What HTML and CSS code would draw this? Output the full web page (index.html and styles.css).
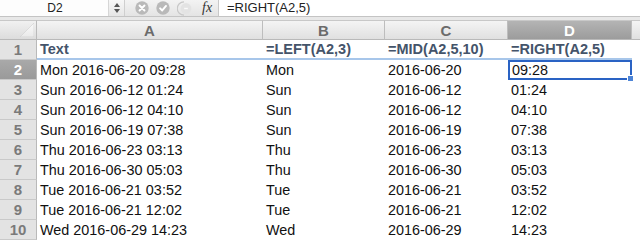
FILE: index.html
```html
<!DOCTYPE html>
<html>
<head>
<meta charset="utf-8">
<link rel="stylesheet" href="styles.css">
</head>
<body>
<div class="app">
  <div class="fbar">
    <div class="namebox">D2</div>
    <div class="stepper">
      <svg width="8" height="12" viewBox="0 0 8 12"><path d="M4 1 L7 5 L1 5 Z M1 7 L7 7 L4 11 Z" fill="#555"/></svg>
    </div>
    <div class="tools">
      <span class="circ">
        <svg width="14" height="14" viewBox="0 0 13 13"><circle cx="6.5" cy="6.5" r="6.2" fill="#b9b9b9"/><path d="M4.2 4.2 L8.8 8.8 M8.8 4.2 L4.2 8.8" stroke="#fff" stroke-width="1.8" stroke-linecap="round"/></svg>
      </span>
      <span class="circ">
        <svg width="14" height="14" viewBox="0 0 13 13"><circle cx="6.5" cy="6.5" r="6.2" fill="#b9b9b9"/><path d="M3.8 6.8 L5.8 8.8 L9.3 4.6" stroke="#fff" stroke-width="1.8" fill="none" stroke-linecap="round" stroke-linejoin="round"/></svg>
      </span>
      <span class="circ faint">
        <svg width="16" height="15" viewBox="0 0 16 15"><path d="M7 0.8 A6.7 6.7 0 0 0 7 14.2" stroke="#c8c8c8" stroke-width="1.2" fill="none"/><circle cx="9" cy="7.5" r="5.4" fill="#e3e3e3"/><path d="M7.2 7.5 L10.8 7.5" stroke="#fafafa" stroke-width="1.4"/></svg>
      </span>
      <span class="fx">fx</span>
    </div>
    <div class="formula">=RIGHT(A2,5)</div>
  </div>
  <div class="gap"></div>
  <div class="grid">
    <div class="corner"><svg class="tri" width="14" height="14" viewBox="0 0 14 14"><defs><linearGradient id="g" x1="0" y1="0" x2="0" y2="1"><stop offset="0" stop-color="#fbfbfb"/><stop offset="1" stop-color="#e9e9e9"/></linearGradient></defs><path d="M14 0 L14 14 L0 14 Z" fill="url(#g)" stroke="#cfcfcf" stroke-width="0.6"/></svg></div>
    <div class="ch">A</div>
    <div class="ch">B</div>
    <div class="ch">C</div>
    <div class="ch sel">D</div>
    <div class="ch last"></div>

    <div class="rh">1</div>
    <div class="c head">Text</div>
    <div class="c head">=LEFT(A2,3)</div>
    <div class="c head">=MID(A2,5,10)</div>
    <div class="c head">=RIGHT(A2,5)</div>
    <div class="c"></div>

    <div class="rh sel">2</div>
    <div class="c">Mon 2016-06-20 09:28</div>
    <div class="c">Mon</div>
    <div class="c">2016-06-20</div>
    <div class="c active">09:28<span class="handle"></span></div>
    <div class="c"></div>

    <div class="rh">3</div>
    <div class="c">Sun 2016-06-12 01:24</div>
    <div class="c">Sun</div>
    <div class="c">2016-06-12</div>
    <div class="c">01:24</div>
    <div class="c"></div>

    <div class="rh">4</div>
    <div class="c">Sun 2016-06-12 04:10</div>
    <div class="c">Sun</div>
    <div class="c">2016-06-12</div>
    <div class="c">04:10</div>
    <div class="c"></div>

    <div class="rh">5</div>
    <div class="c">Sun 2016-06-19 07:38</div>
    <div class="c">Sun</div>
    <div class="c">2016-06-19</div>
    <div class="c">07:38</div>
    <div class="c"></div>

    <div class="rh">6</div>
    <div class="c">Thu 2016-06-23 03:13</div>
    <div class="c">Thu</div>
    <div class="c">2016-06-23</div>
    <div class="c">03:13</div>
    <div class="c"></div>

    <div class="rh">7</div>
    <div class="c">Thu 2016-06-30 05:03</div>
    <div class="c">Thu</div>
    <div class="c">2016-06-30</div>
    <div class="c">05:03</div>
    <div class="c"></div>

    <div class="rh">8</div>
    <div class="c">Tue 2016-06-21 03:52</div>
    <div class="c">Tue</div>
    <div class="c">2016-06-21</div>
    <div class="c">03:52</div>
    <div class="c"></div>

    <div class="rh">9</div>
    <div class="c">Tue 2016-06-21 12:02</div>
    <div class="c">Tue</div>
    <div class="c">2016-06-21</div>
    <div class="c">12:02</div>
    <div class="c"></div>

    <div class="rh">10</div>
    <div class="c">Wed 2016-06-29 14:23</div>
    <div class="c">Wed</div>
    <div class="c">2016-06-29</div>
    <div class="c">14:23</div>
    <div class="c"></div>
  </div>
</div>
</body>
</html>
```

FILE: styles.css
```css
html, body {
  margin: 0;
  padding: 0;
  background: #fff;
}
.app {
  width: 640px;
  height: 240px;
  overflow: hidden;
  font-family: "Liberation Sans", Arial, sans-serif;
}
.fbar {
  height: 17px;
  display: flex;
  border-bottom: 1px solid #c4c4c4;
  box-sizing: border-box;
  background: #fff;
}
.namebox {
  width: 108px;
  font-size: 12px;
  line-height: 16px;
  text-align: center;
  color: #222;
  padding-left: 2px;
  box-sizing: border-box;
  background: #fdfdfd;
}
.stepper {
  width: 17px;
  display: flex;
  align-items: center;
  justify-content: center;
  border-left: 1px solid #d6d6d6;
  border-right: 1px solid #cfcfcf;
  background: linear-gradient(#f7f7f7, #e6e6e6);
  box-sizing: border-box;
}
.tools {
  width: 94px;
  display: flex;
  align-items: center;
  background: linear-gradient(#f3f3f3, #e4e4e4);
  border-right: 1px solid #c8c8c8;
  box-sizing: border-box;
  padding-left: 10px;
}
.circ {
  display: flex;
  margin-right: 7px;
}
.circ.faint {
  margin-right: 9px;
}
.fx {
  font-family: "Liberation Serif", "Times New Roman", serif;
  font-style: italic;
  font-size: 14px;
  color: #333;
  line-height: 16px;
}
.formula {
  flex: 1;
  font-size: 13px;
  line-height: 16px;
  color: #222;
  padding-left: 8px;
}
.gap {
  height: 3px;
  background: #e8e8e8;
}
.grid {
  display: grid;
  grid-template-columns: 37px 226px 122px 123px 124px 1fr;
  grid-auto-rows: 20px;
}
.corner {
  background: linear-gradient(#f1f1f1, #dcdcdc);
  border-right: 1px solid #b9b9b9;
  border-bottom: 1px solid #b9b9b9;
  border-top: 1px solid #c8c8c8;
  box-sizing: border-box;
  position: relative;
}
.tri {
  position: absolute;
  right: 2px;
  bottom: 2px;
}
.ch {
  background: linear-gradient(#f4f4f4, #e0e0e0);
  border-right: 1px solid #bdbdbd;
  border-bottom: 1px solid #b9b9b9;
  border-top: 1px solid #c8c8c8;
  box-sizing: border-box;
  text-align: center;
  font-size: 15px;
  font-weight: bold;
  color: #6b6b6b;
  line-height: 19px;
}
.ch.sel {
  background: linear-gradient(#b4b4b4, #9c9c9c);
  color: #fff;
}
.ch.last {
  border-right: none;
}
.rh {
  background: #e3e3e3;
  border-right: 1px solid #b9b9b9;
  border-bottom: 1px solid #c9c9c9;
  box-sizing: border-box;
  text-align: center;
  font-size: 15px;
  font-weight: bold;
  color: #7a7a7a;
  line-height: 20px;
}
.rh.sel {
  background: linear-gradient(#a9a9a9, #9a9a9a);
  color: #fff;
}
.c {
  font-size: 14.4px;
  line-height: 20px;
  padding-left: 3px;
  color: #111;
  white-space: nowrap;
  box-sizing: border-box;
  position: relative;
}
.c.head {
  font-size: 14.5px;
  font-weight: bold;
  color: #44546a;
  border-bottom: 2px solid #a7c6ea;
  line-height: 19px;
}
.c.active {
  border: 2px solid #2a63c4;
  line-height: 16px;
  padding-left: 2px;
}
.handle {
  position: absolute;
  right: -4px;
  bottom: -4px;
  width: 5px;
  height: 5px;
  background: #4d84d6;
  border: 1px solid #fff;
}
```
